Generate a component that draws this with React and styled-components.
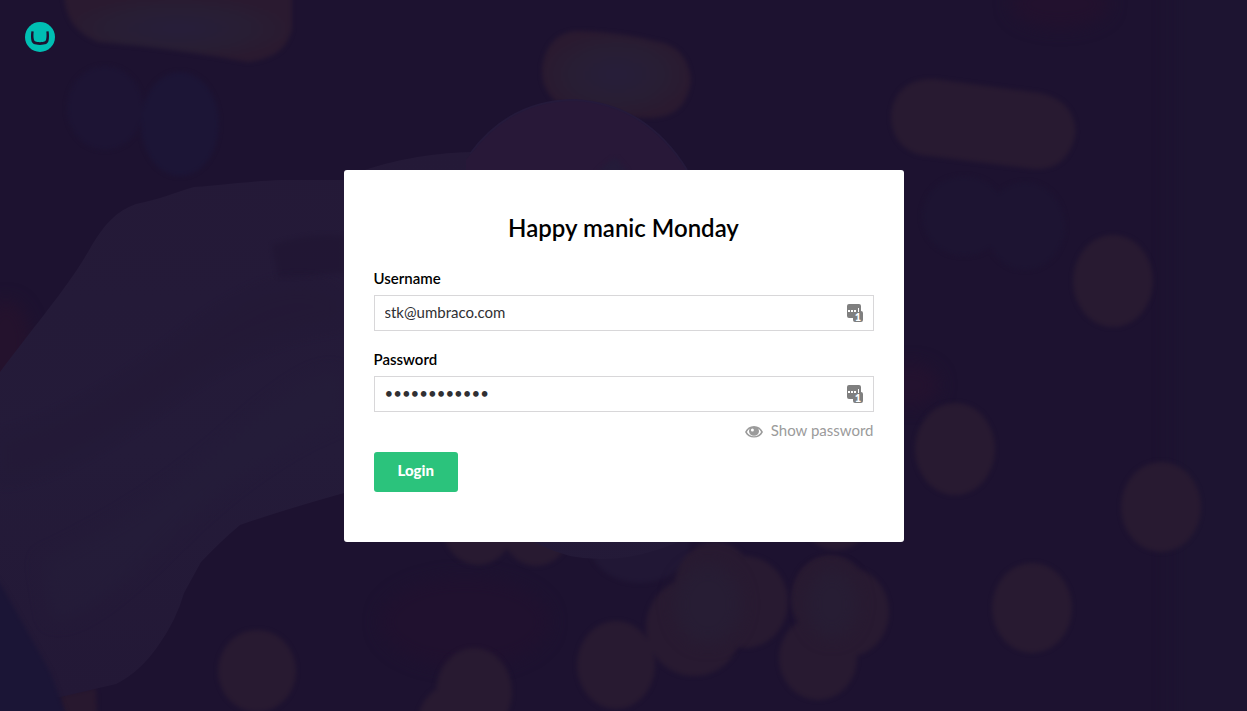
import React from "react";
import styled, { createGlobalStyle } from "styled-components";

const GlobalStyle = createGlobalStyle`
  * { box-sizing: border-box; }
  body {
    margin: 0;
    background: #1d1230;
    font-family: Lato, "Open Sans", sans-serif;
    font-size: 15px;
    line-height: 20px;
    color: #000;
  }
`;

const Page = styled.div`
  position: relative;
  isolation: isolate;
  min-height: 100vh;
  display: grid;
  grid-template-rows: 1fr auto 1fr;
  overflow: hidden;
`;

const Backdrop = styled.svg`
  position: absolute;
  inset: 0;
  width: 100%;
  height: 100%;
  z-index: -1;
`;

const Header = styled.header`
  padding: 22px 25px;
`;

const HomeLink = styled.a`
  display: block;
  width: 30px;
  height: 30px;

  svg { display: block; }
`;

const Card = styled.main`
  width: 100%;
  max-width: 560px;
  justify-self: center;
  padding: 43px 30px 50px;
  background: #fff;
  border-radius: 3px;
`;

const Greeting = styled.h1`
  margin: 0 0 25px;
  font-size: 24px;
  line-height: 30px;
  font-weight: 600;
  text-align: center;
`;

const Field = styled.div`
  margin-top: ${(p) => (p.$spaced ? "18px" : "0")};
`;

const Label = styled.label`
  display: block;
  margin-bottom: 7px;
  font-weight: 600;
`;

const InputFrame = styled.div`
  display: flex;
  align-items: center;
  height: 36px;
  padding: 0 10px;
  border: 1px solid #d8d7d9;
  background: #fff;
`;

const Input = styled.input`
  flex: 1;
  min-width: 0;
  height: 32px;
  padding: 0 0 2px;
  border: 0;
  outline: 0;
  background: transparent;
  font: inherit;
  color: #303033;
`;

const PlainButton = styled.button`
  display: flex;
  align-items: center;
  padding: 0;
  border: 0;
  background: none;
  font: inherit;
  cursor: pointer;
`;

const ToggleRow = styled.div`
  display: flex;
  justify-content: flex-end;
  margin: 8px 0 12px;
`;

const ToggleButton = styled(PlainButton)`
  gap: 8px;
  color: #9b9b9b;
`;

const LoginButton = styled.button`
  display: block;
  height: 40px;
  padding: 0 24px 4px;
  border: 0;
  border-radius: 3px;
  background: #2bc37c;
  color: #fff;
  font: inherit;
  font-size: 15px;
  font-weight: 900;
  cursor: pointer;
`;

const bokeh = [
  [1113, 281, 40, 46],
  [955, 449, 40, 46],
  [1161, 507, 40, 45],
  [1032, 608, 40, 45],
  [257, 671, 39, 41],
  [616, 665, 39, 44],
  [474, 692, 38, 44],
  [455, 722, 37, 38],
  [818, 658, 39, 42],
  [850, 612, 39, 44],
  [830, 598, 39, 43],
  [694, 627, 48, 49],
  [715, 586, 40, 44],
  [745, 602, 43, 46],
  [478, 524, 36, 41],
  [536, 524, 36, 42],
  [836, 510, 38, 40],
];

const haze = [
  [105, 108, 38, 42, "#1d1434"],
  [180, 124, 39, 52, "#1c1536"],
  [964, 216, 42, 40, "#1d1432"],
  [1025, 226, 40, 44, "#1d1432"],
  [640, 545, 50, 38, "#211735"],
];

function Background() {
  return (
    <Backdrop viewBox="0 0 1247 711" preserveAspectRatio="xMidYMid slice" aria-hidden="true">
      <defs>
        <filter id="soft" x="-20%" y="-20%" width="140%" height="140%" colorInterpolationFilters="sRGB">
          <feGaussianBlur stdDeviation="2" />
        </filter>
        <filter id="softer" x="-60%" y="-60%" width="220%" height="220%" colorInterpolationFilters="sRGB">
          <feGaussianBlur stdDeviation="8" />
        </filter>
        <radialGradient id="glow">
          <stop offset="0" stopColor="#271e3a" />
          <stop offset="0.6" stopColor="#281e34" />
          <stop offset="1" stopColor="#2a1a30" />
        </radialGradient>
        <linearGradient id="hand" x1="0" y1="0" x2="0" y2="1">
          <stop offset="0" stopColor="#241937" />
          <stop offset="0.55" stopColor="#241b39" />
          <stop offset="1" stopColor="#231836" />
        </linearGradient>
      </defs>
      <rect width="1247" height="711" fill="#1d1230" />
      <g filter="url(#softer)">
        <ellipse cx="6" cy="345" rx="26" ry="45" fill="#24122d" />
        <ellipse cx="465" cy="622" rx="85" ry="45" fill="#20112f" />
        <ellipse cx="1060" cy="4" rx="50" ry="24" fill="#22112e" />
        <ellipse cx="910" cy="385" rx="30" ry="22" fill="#23122f" />
        <rect x="1170" y="-20" width="110" height="751" fill="#1d1431" />
      </g>
      <g filter="url(#soft)">
        {haze.map(([cx, cy, rx, ry, fill]) => (
          <ellipse key={cx} cx={cx} cy={cy} rx={rx} ry={ry} fill={fill} />
        ))}
        <path d="M64-5C66 22 78 33 98 42Q172 48 248 62C274 59 288 48 292 28V-5Z" fill="url(#glow)" />
        <path d="M542 70C544 48 555 32 578 31Q620 32 655 41C676 44 689 57 691 81C687 105 676 117 650 118Q600 117 555 101C546 91 542 84 542 70Z" fill="url(#glow)" />
        <path d="M891 115C893 93 908 78 934 79L1040 93C1066 99 1077 115 1075 136C1070 158 1056 170 1034 169L921 155C900 150 891 134 891 115Z" fill="#281a31" />
        {bokeh.map(([cx, cy, rx, ry]) => (
          <ellipse key={`${cx}-${cy}`} cx={cx} cy={cy} rx={rx} ry={ry} fill="#281a31" />
        ))}
        <path d="M60 695L96 688L97 720H62Z" fill="#28182f" />
      </g>
      <g filter="url(#softer)">
        <ellipse cx="708" cy="604" rx="34" ry="40" fill="#271d34" />
        <ellipse cx="832" cy="604" rx="26" ry="34" fill="#271d34" />
      </g>
      <path d="M0 372C35 325 70 285 92 245C104 225 116 211 136 204C158 200 176 192 194 187C226 185 250 181 282 180L356 180V173Q414 152 480 152L690 250L720 520Q640 570 570 556Q530 545 500 520L344 493Q280 511 240 525Q222 540 201 562L184 593Q176 621 158 646Q140 672 116 684L60 697L0 697Z" fill="url(#hand)" />
      <path d="M272 245Q310 232 344 236V272Q310 277 278 277Z" fill="#201532" opacity="0.6" filter="url(#soft)" />
      <path d="M0 440Q90 415 190 335T344 300V322Q250 335 160 402T0 480Z" fill="#211632" opacity="0.25" filter="url(#softer)" />
      <path d="M40 560Q150 510 240 430T344 380V420Q260 450 170 540T50 620Z" fill="#251e3a" opacity="0.5" filter="url(#softer)" />
      <path d="M-10 570L4 590L50 672L70 725H-10Z" fill="#1b1536" filter="url(#soft)" />
      <path d="M466 160Q508 100 575 100Q646 104 690 175V200H466Z" fill="#281838" />
      <path d="M470 154Q510 100 575 100Q646 104 687 170" fill="none" stroke="#251a3b" strokeWidth="2" />
      <path d="M597 172L615 157L628 172Z" fill="#241b39" filter="url(#soft)" />
    </Backdrop>
  );
}

function Logo() {
  return (
    <svg width="30" height="30" viewBox="0 0 30 30" aria-hidden="true">
      <circle cx="15" cy="15" r="15" fill="#00bfb3" />
      <path
        d="M6.4 9.2L8.7 9.5C8.3 12.5 8.4 15.5 8.9 17.6C9.4 19.6 11 20.2 15 20.2S20.6 19.6 21.1 17.6C21.6 15.5 21.7 12.5 21.3 9.5L23.6 9.2C24.2 12.4 24.1 16 23.6 18.6C22.9 22 20.7 22.9 15 22.9S7.1 22 6.4 18.6C5.9 16 5.8 12.4 6.4 9.2Z"
        fill="#1d1230"
      />
    </svg>
  );
}

function PasswordManagerIcon() {
  return (
    <svg width="16" height="22" viewBox="0 -2 16 22" aria-hidden="true">
      <path d="M2 0H12Q14 0 14 2V7Q16 7 16 9V16Q16 18 14 18H8Q6 18 6 16V14H2Q0 14 0 12V2Q0 0 2 0Z" fill="#7f7f7f" />
      <path d="M1 6h2v2h-2zM4 6h2v2h-2zM7 6h2v2h-2zM11 4h1v4h-1z" fill="#fff" />
      <text x="11" y="17" textAnchor="middle" fontFamily="Lato, sans-serif" fontSize="11" fontWeight="900" fill="#fff">1</text>
    </svg>
  );
}

function EyeIcon() {
  return (
    <svg width="18" height="16" viewBox="0 -2 18 16" aria-hidden="true">
      <path
        fillRule="evenodd"
        fill="#9b9b9b"
        d="M0 8C1.800 4.200 5 2 9 2S16.200 4.200 18 8C16.200 11.800 13 13.600 9 13.600S1.800 11.800 0 8ZM1.900 8C3.200 10.700 5.700 12.200 9 12.200S14.800 10.700 16.100 8C15.400 6.500 14.400 5.300 13.100 4.500Q14 5.700 14 7.200A5 4.600 0 0 1 4 7.200Q4 5.700 4.900 4.500C3.600 5.300 2.600 6.500 1.900 8ZM7.400 4.600A1.500 1.500 0 1 0 7.400 7.600A1.500 1.500 0 1 0 7.400 4.600Z"
      />
    </svg>
  );
}

function TextField({ id, label, type, defaultValue, spaced }) {
  return (
    <Field $spaced={spaced}>
      <Label htmlFor={id}>{label}</Label>
      <InputFrame>
        <Input id={id} name={id} type={type} defaultValue={defaultValue} />
        <PlainButton type="button" aria-label={`Fill ${label.toLowerCase()}`}>
          <PasswordManagerIcon />
        </PlainButton>
      </InputFrame>
    </Field>
  );
}

export default function App() {
  const [visible, setVisible] = React.useState(false);
  return (
    <>
      <GlobalStyle />
      <Page>
        <Background />
        <Header>
          <HomeLink href="#" aria-label="Umbraco">
            <Logo />
          </HomeLink>
        </Header>
        <Card>
          <Greeting>Happy manic Monday</Greeting>
          <form onSubmit={(e) => e.preventDefault()}>
            <TextField id="username" label="Username" type="text" defaultValue="stk@umbraco.com" />
            <TextField
              id="password"
              label="Password"
              type={visible ? "text" : "password"}
              defaultValue="manicmonday1"
              spaced
            />
            <ToggleRow>
              <ToggleButton type="button" onClick={() => setVisible(!visible)}>
                <EyeIcon />
                {visible ? "Hide password" : "Show password"}
              </ToggleButton>
            </ToggleRow>
            <LoginButton type="submit">Login</LoginButton>
          </form>
        </Card>
      </Page>
    </>
  );
}
